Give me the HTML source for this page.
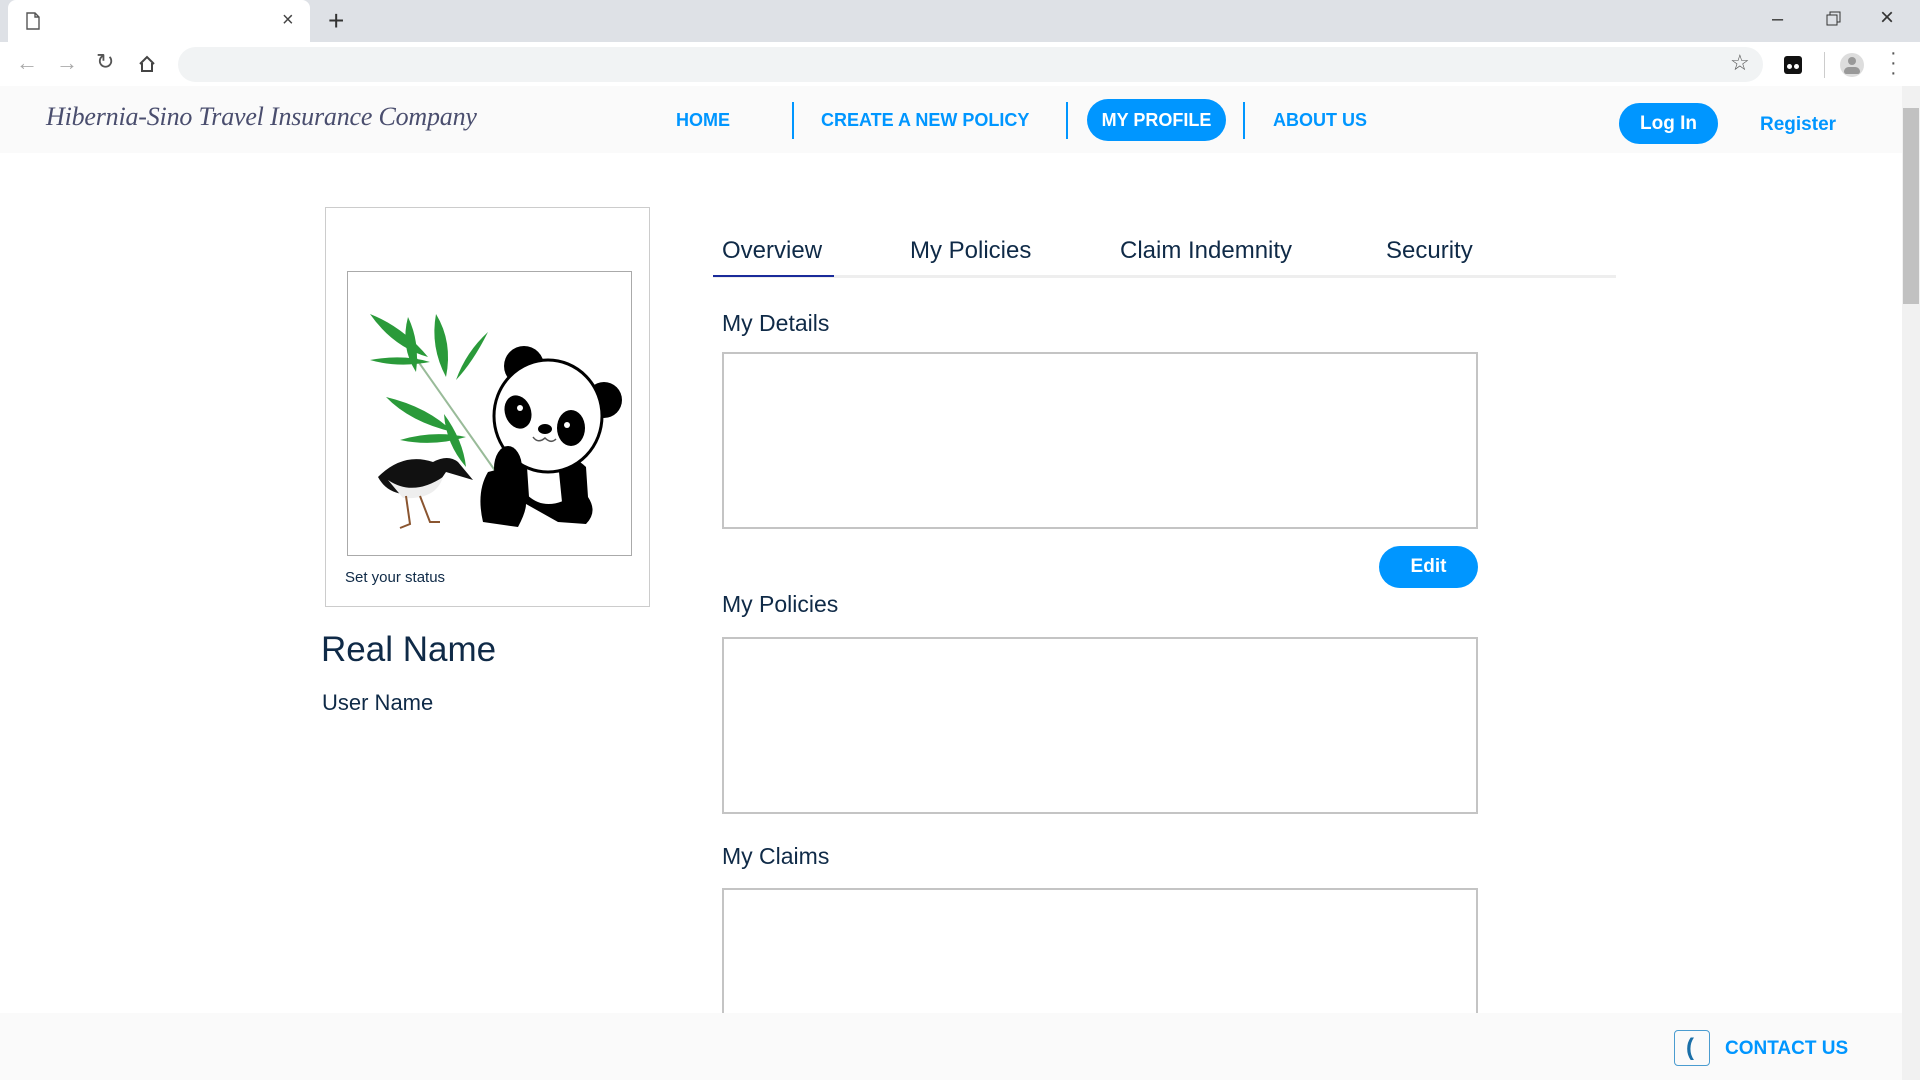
<!DOCTYPE html>
<html><head><meta charset="utf-8"><style>
*{margin:0;padding:0;box-sizing:border-box}
body{width:1920px;height:1080px;overflow:hidden;background:#fff;font-family:"Liberation Sans",sans-serif;position:relative;color:#0f2a47}
.a{position:absolute}
.nav{color:#0096ff;font-weight:bold;font-size:18px}
.pill{background:#0096ff;color:#fff;border-radius:22px;font-weight:bold;display:flex;align-items:center;justify-content:center}
.box{border:2px solid #c4c4c4;position:absolute}
.sep{position:absolute;width:2px;background:#0096ff;top:102px;height:37px}
</style></head><body>
<div class="a" style="left:0;top:0;width:1920px;height:42px;background:#dee1e6"></div>
<div class="a" style="left:8px;top:0;width:302px;height:42px;background:#fff;border-radius:8px 8px 0 0"></div>
<svg class="a" style="left:26px;top:12px" width="14" height="18"><path d="M1 1h8l4 4v12H1z M9 1v4h4" fill="none" stroke="#555" stroke-width="1.4"/></svg>
<div class="a" style="left:282px;top:9px;font-size:20px;color:#444">×</div>
<div class="a" style="left:328px;top:5px;font-size:28px;color:#333">+</div>
<div class="a" style="left:1772px;top:8px;font-size:20px;color:#333">–</div>
<svg class="a" style="left:1826px;top:11px" width="16" height="16"><rect x="1" y="4" width="10" height="10" fill="none" stroke="#333"/><path d="M4 4V1h10v10h-3" fill="none" stroke="#333"/></svg>
<div class="a" style="left:1880px;top:4px;font-size:24px;color:#333">×</div>
<div class="a" style="left:0;top:42px;width:1920px;height:44px;background:#fff"></div>
<div class="a" style="left:16px;top:50px;font-size:22px;color:#aaa">←</div>
<div class="a" style="left:56px;top:50px;font-size:22px;color:#aaa">→</div>
<div class="a" style="left:96px;top:49px;font-size:22px;color:#555">↻</div>
<svg class="a" style="left:138px;top:55px" width="18" height="18"><path d="M2 9L9 2l7 7M4 8v8h10V8" fill="none" stroke="#444" stroke-width="2"/></svg>
<div class="a" style="left:178px;top:47px;width:1585px;height:35px;background:#f1f3f4;border-radius:18px"></div>
<div class="a" style="left:1730px;top:50px;font-size:22px;color:#555">☆</div>
<div class="a" style="left:1784px;top:56px;width:18px;height:18px;background:#111;border-radius:3px"></div>
<div class="a" style="left:1787px;top:64px;width:5px;height:5px;background:#fff;border-radius:50%"></div>
<div class="a" style="left:1794px;top:64px;width:5px;height:5px;background:#fff;border-radius:50%"></div>
<div class="a" style="left:1824px;top:52px;width:1px;height:26px;background:#ccc"></div>
<div class="a" style="left:1840px;top:53px;width:24px;height:24px;background:#ddd;border-radius:50%"></div>
<div class="a" style="left:1848px;top:57px;width:8px;height:8px;background:#999;border-radius:50%"></div>
<div class="a" style="left:1844px;top:67px;width:16px;height:7px;background:#999;border-radius:8px 8px 4px 4px"></div>
<div class="a" style="left:1890px;top:48px;font-size:20px;color:#555;line-height:10px">·<br>·<br>·</div>
<div class="a" style="left:0;top:86px;width:1902px;height:67px;background:#fafafa"></div>
<div class="a" style="left:46px;top:102px;font-family:'Liberation Serif',serif;font-style:italic;font-size:26px;color:#4a4e6e;letter-spacing:-0.2px">Hibernia-Sino Travel Insurance Company</div>
<div class="a nav" style="left:676px;top:110px">HOME</div>
<div class="sep" style="left:792px"></div>
<div class="a nav" style="left:821px;top:110px">CREATE A NEW POLICY</div>
<div class="sep" style="left:1066px"></div>
<div class="a pill" style="left:1087px;top:99px;width:139px;height:42px;font-size:18px">MY PROFILE</div>
<div class="sep" style="left:1243px"></div>
<div class="a nav" style="left:1273px;top:110px">ABOUT US</div>
<div class="a pill" style="left:1619px;top:103px;width:99px;height:41px;font-size:19px">Log In</div>
<div class="a nav" style="left:1760px;top:114px;font-size:19px;font-weight:bold">Register</div>
<div class="a" style="left:1902px;top:86px;width:18px;height:994px;background:#f1f1f1"></div>
<div class="a" style="left:1903px;top:108px;width:16px;height:196px;background:#c1c1c1"></div>
<div class="box" style="left:325px;top:207px;width:325px;height:400px;border-width:1px;border-color:#ccc"></div>
<div class="box" style="left:347px;top:271px;width:285px;height:285px;border-width:1px;border-color:#aaa"></div>
<svg class="a" style="left:348px;top:272px" width="283" height="283" viewBox="0 0 283 283">
<path d="M60 75 L148 200" stroke="#9b9" stroke-width="2"/>
<g fill="#2a9a3a">
<path d="M22 42 Q55 55 80 85 Q45 75 22 42z"/><path d="M22 88 Q55 82 82 90 Q50 96 22 88z"/>
<path d="M60 45 Q72 70 68 100 Q52 75 60 45z"/><path d="M88 42 Q105 70 98 105 Q82 75 88 42z"/>
<path d="M140 60 Q125 90 108 108 Q118 80 140 60z"/><path d="M38 125 Q80 135 105 160 Q62 150 38 125z"/>
<path d="M52 168 Q85 158 118 165 Q85 175 52 168z"/><path d="M96 142 Q115 168 118 195 Q98 172 96 142z"/>
</g>
<circle cx="176" cy="94" r="20" fill="#000"/><circle cx="256" cy="128" r="18" fill="#000"/>
<path d="M140 200 Q128 220 135 250 L170 255 Q178 240 178 232 L210 250 L238 252 Q250 240 240 225 L238 195 Q220 178 200 188 L160 195z" fill="#000"/>
<path d="M178 195 Q200 188 212 200 L215 230 Q195 238 180 225z" fill="#fff" stroke="#000" stroke-width="2"/>
<ellipse cx="200" cy="144" rx="54" ry="56" fill="#fff" stroke="#000" stroke-width="3"/>
<ellipse cx="170" cy="140" rx="13" ry="17" fill="#000" transform="rotate(-20 170 140)"/><ellipse cx="223" cy="156" rx="14" ry="18" fill="#000"/>
<circle cx="172" cy="136" r="3" fill="#fff"/><circle cx="219" cy="153" r="3" fill="#fff"/>
<ellipse cx="197" cy="157" rx="7" ry="5" fill="#000"/>
<path d="M185 165 Q190 172 197 166 Q203 172 208 167" stroke="#555" fill="none" stroke-width="1.5"/>
<ellipse cx="160" cy="196" rx="14" ry="22" fill="#000"/>
<path d="M30 205 Q55 180 85 190 Q100 182 110 190 L125 208 L98 200 Q85 222 55 222 Q38 220 30 205z" fill="#111"/>
<path d="M40 208 Q65 225 95 205 Q88 228 55 226z" fill="#eee"/>
<path d="M58 224 L62 252 L52 256 M72 224 L82 250 L92 250" stroke="#8a5530" stroke-width="2" fill="none"/>
</svg>
<div class="a" style="left:345px;top:569px;font-size:15px">Set your status</div>
<div class="a" style="left:321px;top:630px;font-size:35px">Real Name</div>
<div class="a" style="left:322px;top:690px;font-size:22px">User Name</div>
<div class="a" style="left:713px;top:275px;width:903px;height:3px;background:#eee"></div>
<div class="a" style="left:713px;top:275px;width:121px;height:2px;background:#1a2b9a"></div>
<div class="a" style="left:722px;top:237px;font-size:24px">Overview</div>
<div class="a" style="left:910px;top:237px;font-size:24px">My Policies</div>
<div class="a" style="left:1120px;top:237px;font-size:24px">Claim Indemnity</div>
<div class="a" style="left:1386px;top:237px;font-size:24px">Security</div>
<div class="a" style="left:722px;top:310px;font-size:23px">My Details</div>
<div class="box" style="left:722px;top:352px;width:756px;height:177px"></div>
<div class="a pill" style="left:1379px;top:546px;width:99px;height:42px;font-size:19px">Edit</div>
<div class="a" style="left:722px;top:591px;font-size:23px">My Policies</div>
<div class="box" style="left:722px;top:637px;width:756px;height:177px"></div>
<div class="a" style="left:722px;top:843px;font-size:23px">My Claims</div>
<div class="box" style="left:722px;top:888px;width:756px;height:177px"></div>
<div class="a" style="left:0;top:1013px;width:1902px;height:67px;background:#fafafa"></div>
<div class="a" style="left:1674px;top:1030px;width:36px;height:36px;border:1.5px solid #4a9cd0;border-radius:4px"></div>
<div class="a" style="left:1686px;top:1034px;font-size:24px;font-weight:bold;color:#1a6fa8">(</div>
<div class="a nav" style="left:1725px;top:1038px;font-size:19px">CONTACT US</div>
</body></html>
